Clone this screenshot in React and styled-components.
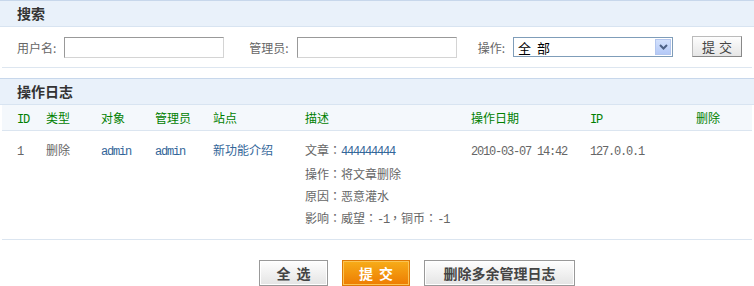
import React from 'react';
import styled, { createGlobalStyle } from 'styled-components';

const GlobalStyle = createGlobalStyle`
  body {
    margin: 0;
    background: #fff;
    font-family: "Noto Sans CJK SC", "Liberation Sans", sans-serif;
    font-size: 12px;
    color: #666;
  }
`;

const Page = styled.div`
  width: 754px;
  display: flex;
  flex-direction: column;
`;

const SectionTitle = styled.div`
  height: 25px;
  line-height: 25px;
  padding-left: 17px;
  background: #e9f1fa;
  border-top: 1px solid #c7d7eb;
  border-bottom: 1px solid #d8e4f1;
  font-size: 14px;
  font-weight: bold;
  color: #333;
  margin-top: ${p => p.$top || 0}px;
`;

const SearchRow = styled.div`
  display: flex;
  align-items: center;
  height: 40px;
  margin: 0 2px;
  padding-left: 15px;
  border-bottom: 1px solid #dde6f0;
`;

const Label = styled.span`
  color: #666;
  margin-right: ${p => p.$gap}px;
  white-space: nowrap;
`;

const TextInput = styled.input`
  box-sizing: border-box;
  width: 160px;
  height: 21px;
  border: 1px solid #d4d4d4;
  border-top-color: #999;
  border-left-color: #999;
  margin-right: ${p => p.$after}px;
  padding: 0 3px;
`;

const Select = styled.div`
  box-sizing: border-box;
  width: 160px;
  height: 20px;
  border: 1px solid #7f9db9;
  display: flex;
  align-items: center;
  justify-content: space-between;
  padding: 0 1px 0 4px;
  margin-right: 19px;
  color: #000;
  font-size: 13px;
  word-spacing: 3px;
`;

const SelectArrow = styled.span`
  width: 16px;
  height: 16px;
  background: linear-gradient(#d3e1fc, #b4c9f7);
  border: 1px solid #b3c6ee;
  box-sizing: border-box;
  display: flex;
  align-items: center;
  justify-content: center;
`;

const SmallButton = styled.button`
  width: 50px;
  height: 21px;
  padding: 0;
  border: 1px solid #888;
  border-top-color: #bbb;
  border-left-color: #bbb;
  background: linear-gradient(#fdfdfd, #e6e6e6);
  color: #444;
  font-family: inherit;
  font-size: 13px;
  letter-spacing: 4px;
  text-indent: 4px;
  margin-top: -2px;
`;

const cols = '29px 55px 54px 58px 92px 166px 119px 106px 1fr';

const HeadRow = styled.div`
  display: grid;
  grid-template-columns: ${cols};
  align-items: baseline;
  height: 25px;
  line-height: 25px;
  margin: 0 2px;
  padding-left: 15px;
  background: #f4f8fc;
  border-bottom: 1px solid #dbe5f0;
  color: #008000;
`;

const BodyRow = styled.div`
  display: grid;
  grid-template-columns: ${cols};
  align-items: baseline;
  margin: 0 2px;
  padding: 8px 0 8px 15px;
  border-bottom: 1px solid #dbe5f0;
  line-height: 22px;
  color: #666;
`;

const Cell = styled.div`
  display: flex;
  flex-direction: column;
`;

const Mono = styled.span`
  font-family: "Liberation Mono", "DejaVu Sans Mono", monospace;
  font-size: 12px;
  letter-spacing: -1.2px;
  color: ${p => p.$color || 'inherit'};
`;

const Punct = styled.span`
  font-family: "Noto Sans CJK TC", "Noto Sans CJK SC", sans-serif;
`;

const Link = styled.span`
  color: #336699;
`;

const Actions = styled.div`
  display: flex;
  gap: 14px;
  padding: 20px 0 0 259px;
`;

const BigButton = styled.button`
  height: 26px;
  width: ${p => p.$w}px;
  padding: 0;
  font-family: inherit;
  font-size: 14px;
  font-weight: bold;
  letter-spacing: ${p => (p.$spaced ? '6px' : '0')};
  text-indent: ${p => (p.$spaced ? '6px' : '0')};
  border: 1px solid ${p => (p.$primary ? '#de7a06' : '#999')};
  color: ${p => (p.$primary ? '#fff' : '#444')};
  background: ${p =>
    p.$primary
      ? 'linear-gradient(#f7ad19, #ed7c02)'
      : 'linear-gradient(#fefefe, #e4e4e4)'};
  box-shadow: inset 0 0 0 1px ${p => (p.$primary ? '#fbc453' : '#fff')};
`;

export default function App() {
  return (
    <Page>
      <GlobalStyle />
      <SectionTitle>搜索</SectionTitle>
      <SearchRow>
        <Label $gap={8}>用户名:</Label>
        <TextInput $after={25} />
        <Label $gap={8}>管理员:</Label>
        <TextInput $after={21} />
        <Label $gap={8}>操作:</Label>
        <Select>
          <span>全 部</span>
          <SelectArrow>
            <svg width="9" height="6" viewBox="0 0 9 6">
              <path d="M1 1l3.5 3.5L8 1" stroke="#4d6185" strokeWidth="2" fill="none" />
            </svg>
          </SelectArrow>
        </Select>
        <SmallButton>提交</SmallButton>
      </SearchRow>

      <SectionTitle $top={10}>操作日志</SectionTitle>
      <HeadRow>
        <Mono>ID</Mono>
        <span>类型</span>
        <span>对象</span>
        <span>管理员</span>
        <span>站点</span>
        <span>描述</span>
        <span>操作日期</span>
        <Mono>IP</Mono>
        <span>删除</span>
      </HeadRow>
      <BodyRow>
        <Mono>1</Mono>
        <span>删除</span>
        <Mono $color="#336699">admin</Mono>
        <Mono $color="#336699">admin</Mono>
        <Link>新功能介绍</Link>
        <Cell>
          <span>文章<Punct>：</Punct><Mono $color="#336699">444444444</Mono></span>
          <span>操作<Punct>：</Punct>将文章删除</span>
          <span>原因<Punct>：</Punct>恶意灌水</span>
          <span>影响<Punct>：</Punct>威望<Punct>：</Punct><Mono>-1</Mono><Punct>，</Punct>铜币<Punct>：</Punct><Mono>-1</Mono></span>
        </Cell>
        <Mono>2010-03-07 14:42</Mono>
        <Mono>127.0.0.1</Mono>
        <span />
      </BodyRow>

      <Actions>
        <BigButton $w={69} $spaced>全选</BigButton>
        <BigButton $w={68} $spaced $primary>提交</BigButton>
        <BigButton $w={151}>删除多余管理日志</BigButton>
      </Actions>
    </Page>
  );
}
